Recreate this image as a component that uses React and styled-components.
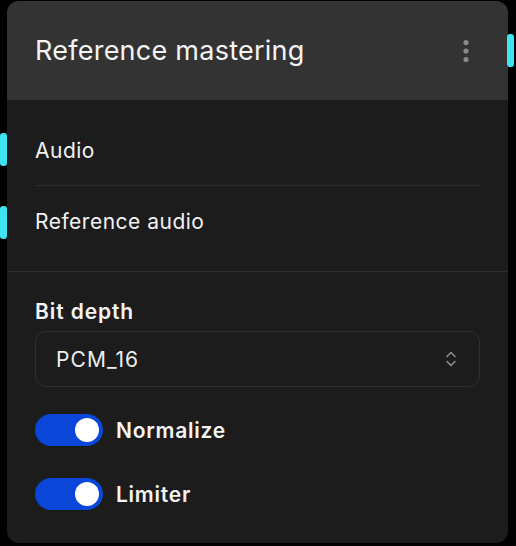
import React from "react";
import styled, { createGlobalStyle } from "styled-components";

const Global = createGlobalStyle`
  html, body { margin: 0; padding: 0; background: #000; }
  body { font-family: Inter, "Noto Sans", sans-serif; -webkit-font-smoothing: antialiased; }
`;

const Page = styled.div`
  width: 516px;
  height: 546px;
  padding: 1px 0 0 7px;
  box-sizing: border-box;
  background: #000;
`;

const Card = styled.div`
  position: relative;
  width: 501px;
  height: 542px;
  border-radius: 12px;
  background: #1c1c1c;
  display: flex;
  flex-direction: column;
`;

const Header = styled.div`
  height: 99px;
  background: #333333;
  border-radius: 12px 12px 0 0;
  display: flex;
  align-items: center;
  justify-content: space-between;
  padding: 0 39px 0 28px;
`;

const Title = styled.div`
  color: #f4f4f4;
  font-size: 27px;
  font-weight: 400;
  letter-spacing: 0.25px;
`;

const Handle = styled.div`
  position: absolute;
  width: 7px;
  height: 33px;
  background: #3fe3f2;
  border-radius: 3px;
  top: ${(p) => p.$top}px;
  ${(p) => (p.$side === "left" ? "left: -7px;" : "right: -6px;")}
`;

const Section = styled.div`
  padding: 15px 28px 15px;
  display: flex;
  flex-direction: column;
  border-bottom: 1px solid #2b2b2b;
`;

const Row = styled.div`
  height: 70px;
  display: flex;
  align-items: center;
  color: #f2f2f2;
  font-size: 21px;
  letter-spacing: 0.5px;
  ${(p) => (p.$divided ? "border-bottom: 1px solid #2c2c2c;" : "")}
`;

const Options = styled.div`
  padding: 28px 28px 0;
  display: flex;
  flex-direction: column;
`;

const Label = styled.div`
  color: #f4f4f4;
  font-size: 21px;
  font-weight: 600;
  line-height: 24px;
  letter-spacing: 0.9px;
`;

const Select = styled.div`
  margin-top: 7px;
  height: 56px;
  box-sizing: border-box;
  border: 1px solid #2e2e2e;
  border-radius: 11px;
  display: flex;
  align-items: center;
  justify-content: space-between;
  padding: 0 22px 0 20px;
  color: #eeeeee;
  font-size: 21px;
  letter-spacing: 1.1px;
`;

const ToggleRow = styled.div`
  margin-top: ${(p) => p.$gap}px;
  display: flex;
  align-items: center;
  gap: 13px;
`;

const Track = styled.div`
  width: 68px;
  height: 32px;
  border-radius: 16px;
  background: #0a46d8;
  display: flex;
  align-items: center;
  justify-content: flex-end;
  padding: 0 4px;
  box-sizing: border-box;
`;

const Knob = styled.div`
  width: 24px;
  height: 24px;
  border-radius: 50%;
  background: #fff;
`;

const ToggleLabel = styled.div`
  color: #f4f4f4;
  font-size: 21px;
  font-weight: 600;
  letter-spacing: 0.75px;
`;

const Kebab = () => (
  <svg width="6" height="24" viewBox="0 0 6 24">
    <circle cx="3" cy="3.5" r="2.6" fill="#8a8a8a" />
    <circle cx="3" cy="12" r="2.6" fill="#8a8a8a" />
    <circle cx="3" cy="20.5" r="2.6" fill="#8a8a8a" />
  </svg>
);

const Chevrons = () => (
  <svg width="12" height="18" viewBox="0 0 12 18" fill="none" stroke="#8e8e8e" strokeWidth="1.6" strokeLinecap="round" strokeLinejoin="round">
    <path d="M2 6.5 L6 2.5 L10 6.5" />
    <path d="M2 11.5 L6 15.5 L10 11.5" />
  </svg>
);

const Toggle = ({ label, gap }) => (
  <ToggleRow $gap={gap}>
    <Track>
      <Knob />
    </Track>
    <ToggleLabel>{label}</ToggleLabel>
  </ToggleRow>
);

export default function App() {
  return (
    <>
      <Global />
      <Page>
        <Card>
          <Handle $side="right" $top={33} />
          <Handle $side="left" $top={132} />
          <Handle $side="left" $top={205} />
          <Header>
            <Title>Reference mastering</Title>
            <Kebab />
          </Header>
          <Section>
            <Row $divided>Audio</Row>
            <Row>Reference audio</Row>
          </Section>
          <Options>
            <Label>Bit depth</Label>
            <Select>
              <span>PCM_16</span>
              <Chevrons />
            </Select>
            <Toggle label="Normalize" gap={27} />
            <Toggle label="Limiter" gap={32} />
          </Options>
        </Card>
      </Page>
    </>
  );
}
